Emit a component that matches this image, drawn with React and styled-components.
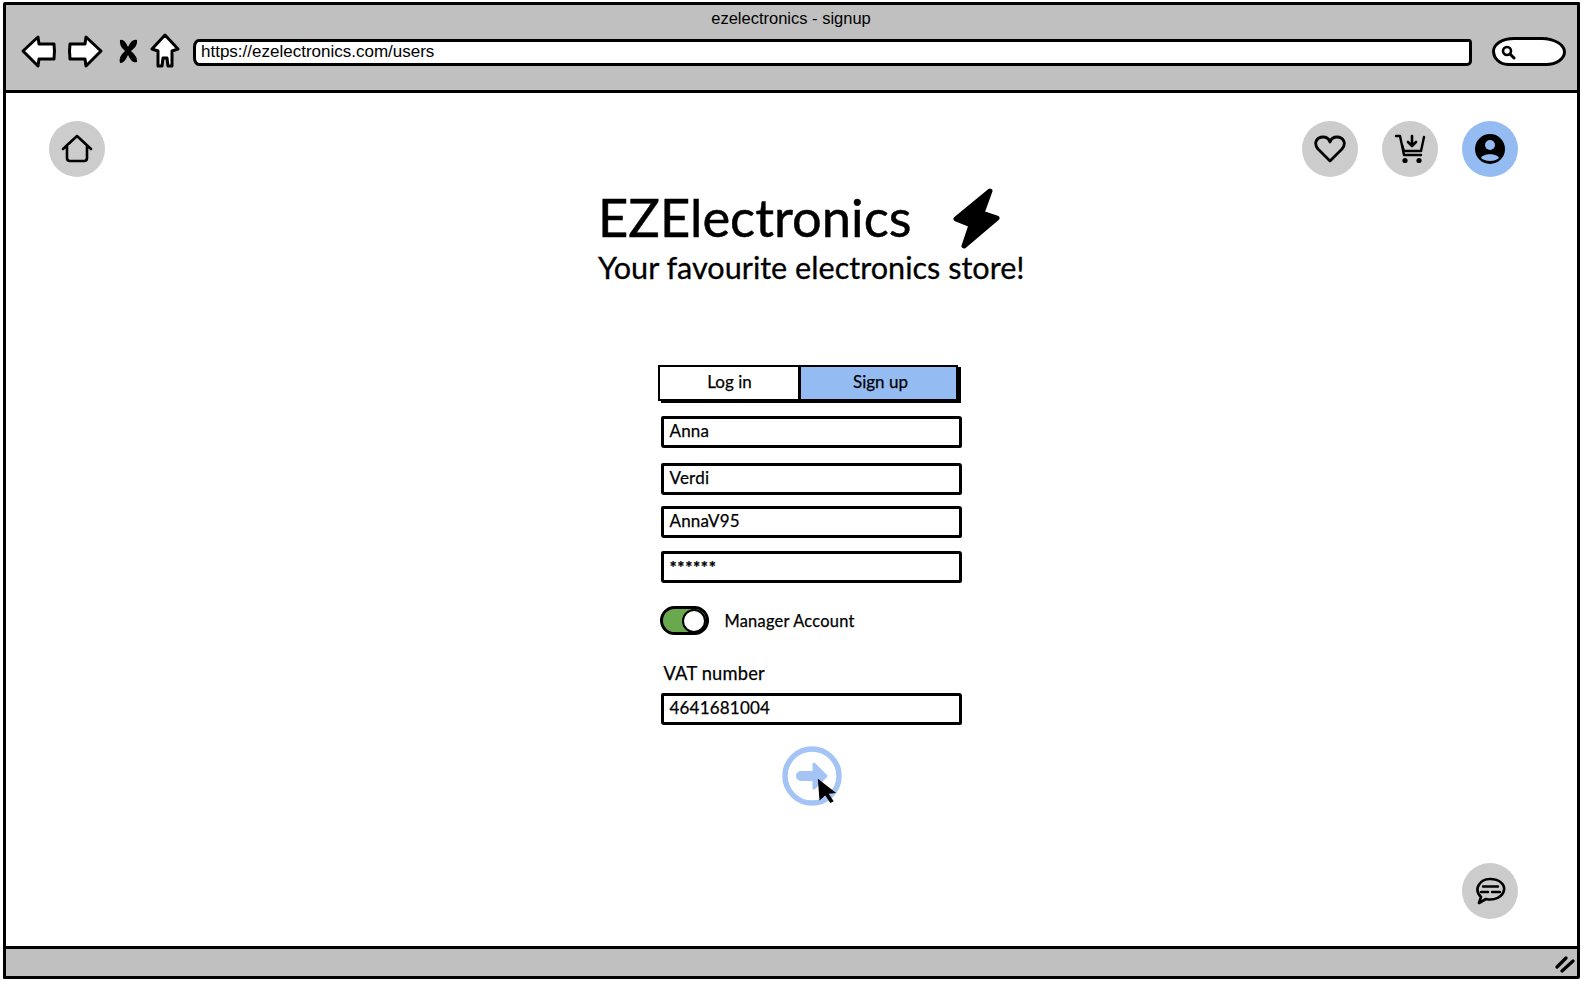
import React from "react";
import styled, { createGlobalStyle } from "styled-components";

const Global = createGlobalStyle`
  html, body { margin: 0; padding: 0; background: #fff; overflow: hidden; }
  #root { height: 981px; }
  * { box-sizing: border-box; }
`;

const Page = styled.div`
  height: 981px;
  width: 1581px;
  padding: 2px 1px 2px 3px;
  font-family: "Lato", "Liberation Sans", sans-serif;
  -webkit-text-stroke: 0.25px #000;
  color: #000;
`;
const Frame = styled.div`
  height: 100%;
  display: flex;
  flex-direction: column;
  border: 3px solid #000;
  border-radius: 2px 1px 2px 1px;
`;
const BrowserBar = styled.header`
  height: 88px;
  flex: none;
  background: #c0c0c0;
  border-bottom: 3px solid #000;
  padding: 5px 11px 0 14px;
  -webkit-text-stroke: 0;
`;
const BrowserTitle = styled.div`
  font: 16.5px/16px "Liberation Sans", Arial, sans-serif;
  text-align: center;
  padding-right: 4px;
  height: 16px;
  margin-bottom: 7px;
`;
const ToolRow = styled.div`
  display: flex;
  align-items: center;
`;
const ToolIcon = styled.svg`
  flex: none;
  display: block;
  margin-right: ${(p) => p.$gap}px;
`;
const AddressBar = styled.div`
  flex: 1;
  height: 27px;
  margin: 3px 20px 0 0;
  background: #fff;
  border: 3px solid #000;
  border-radius: 6px 3px 5px 6px / 8px 4px 5px 8px;
  padding-left: 5px;
  font: 17px/20px "Liberation Sans", Arial, sans-serif;
`;
const SearchBox = styled.div`
  flex: none;
  width: 74px;
  height: 29px;
  margin-top: 1px;
  background: #fff;
  border: 3px solid #000;
  border-radius: 22px 24px 20px 16px / 14px 15px 14px 15px;
  padding: 5px 0 0 6px;
`;
const Content = styled.main`
  flex: 1;
  min-height: 0;
  display: flex;
  flex-direction: column;
  padding: 28px 59px 27px 43px;
  background: #fff;
`;
const NavRow = styled.nav`
  display: flex;
  justify-content: space-between;
  flex: none;
`;
const NavGroup = styled.div`
  display: flex;
  gap: 24px;
`;
const RoundButton = styled.div`
  width: 56px;
  height: 56px;
  border-radius: 50%;
  background: ${(p) => (p.$active ? "#94bbf2" : "#cccccc")};
  display: flex;
  align-items: center;
  justify-content: center;
`;
const Center = styled.div`
  flex: 1;
  display: flex;
  flex-direction: column;
  align-items: center;
  padding-left: 54px;
`;
const Hero = styled.div`
  width: 425px;
  margin-top: 10px;
`;
const TitleRow = styled.div`
  display: flex;
  align-items: flex-start;
  height: 62px;
`;
const Title = styled.h1`
  margin: 0;
  font: 400 52.5px/60px "Lato", sans-serif;
  -webkit-text-stroke: 0.5px #000;
  width: 355px;
  flex: none;
`;
const Bolt = styled.svg`
  flex: none;
  display: block;
  margin-top: 1px;
`;
const Subtitle = styled.div`
  font: 400 30.6px/38px "Lato", sans-serif;
  -webkit-text-stroke: 0.3px #000;
  white-space: nowrap;
`;
const Form = styled.div`
  width: 302px;
  margin-top: 78px;
  display: flex;
  flex-direction: column;
`;
const Tabs = styled.div`
  width: 300px;
  height: 36px;
  margin-left: -2px;
  display: flex;
  border: 2px solid #000;
  box-shadow: 3px 2px 0 #000;
`;
const Tab = styled.div`
  height: 100%;
  width: ${(p) => p.$w}px;
  flex: none;
  background: ${(p) => (p.$active ? "#94bbf2" : "#fff")};
  border-left: ${(p) => (p.$active ? "3px solid #000" : "0")};
  display: flex;
  align-items: center;
  justify-content: center;
  padding: 0 0 3px ${(p) => (p.$active ? 5 : 2)}px;
  font-size: 17px;
`;
const Field = styled.div`
  height: 32px;
  margin-top: ${(p) => p.$top}px;
  margin-left: 1px;
  border: 3px solid #000;
  border-radius: 2px 3px 2px 3px;
  background: #fff;
  padding: 0 6px;
  font-size: 17px;
  font-weight: ${(p) => (p.$stars ? 700 : 400)};
  line-height: ${(p) => (p.$stars ? 27 : 23)}px;
  letter-spacing: ${(p) => (p.$stars ? 0.6 : 0.2)}px;
`;
const ToggleRow = styled.div`
  display: flex;
  align-items: center;
  margin-top: 23px;
  height: 29px;
`;
const Toggle = styled.div`
  width: 49px;
  height: 29px;
  flex: none;
  border: 3px solid #000;
  border-radius: 15px;
  background: #6aa84f;
  display: flex;
  justify-content: flex-end;
  align-items: center;
`;
const Knob = styled.div`
  width: 24px;
  height: 24px;
  border: 2px solid #000;
  border-radius: 50%;
  background: #fff;
`;
const ToggleLabel = styled.span`
  margin-left: 16px;
  font-size: 16.4px;
  letter-spacing: 0.25px;
`;
const FieldLabel = styled.div`
  margin: 27px 0 0 4px;
  height: 22px;
  font-size: 18.3px;
  line-height: 22px;
  letter-spacing: 0.2px;
`;
const SubmitWrap = styled.div`
  align-self: center;
  margin: 21px 0 0 2px;
  position: relative;
  width: 60px;
  height: 60px;
`;
const Cursor = styled.svg`
  position: absolute;
  left: 35px;
  top: 31px;
`;
const ChatRow = styled.div`
  display: flex;
  justify-content: flex-end;
  flex: none;
`;
const Footer = styled.footer`
  height: 30px;
  flex: none;
  background: #c0c0c0;
  border-top: 3px solid #000;
  display: flex;
  justify-content: flex-end;
  align-items: center;
  padding: 2px 2px 0 0;
`;

const App = () => (
  <Page>
    <Global />
    <Frame>
      <BrowserBar>
        <BrowserTitle>ezelectronics - signup</BrowserTitle>
        <ToolRow>
          <ToolIcon $gap={10} width="37" height="36" viewBox="0 0 37 36">
            <path d="M3 18 L18 4 L19 11 L34 11 Q35 18 34 26 L19 26 L18 33 Z" fill="#fff" stroke="#000" strokeWidth="3" strokeLinejoin="round" />
          </ToolIcon>
          <ToolIcon $gap={13} width="37" height="36" viewBox="0 0 37 36">
            <path d="M34 18 L19 4 L18 11 L3 11 Q2 18 3 26 L18 26 L19 33 Z" fill="#fff" stroke="#000" strokeWidth="3" strokeLinejoin="round" />
          </ToolIcon>
          <ToolIcon $gap={11} width="22" height="28" viewBox="0 0 22 28">
            <path d="M3 3 Q7 1 11 10 Q15 1 20 3 Q21 9 14 14 Q21 20 20 25 Q15 27 11 18 Q7 27 3 26 Q1 20 8 14 Q2 9 3 3 Z" fill="#000" />
          </ToolIcon>
          <ToolIcon $gap={13} width="30" height="36" viewBox="0 0 30 36">
            <path d="M15 2 L28 16 L22 18 L22 33 L18 33 L17 25 L13 25 L12 33 L8 33 L8 18 L2 16 Z" fill="#fff" stroke="#000" strokeWidth="3" strokeLinejoin="round" />
          </ToolIcon>
          <AddressBar>https://ezelectronics.com/users</AddressBar>
          <SearchBox>
            <svg width="15" height="15" viewBox="0 0 15 15" style={{ display: "block" }}>
              <circle cx="6" cy="6" r="4" fill="none" stroke="#000" strokeWidth="2.6" />
              <path d="M9 9 L13 13" stroke="#000" strokeWidth="3" strokeLinecap="round" />
            </svg>
          </SearchBox>
        </ToolRow>
      </BrowserBar>
      <Content>
        <NavRow>
          <RoundButton>
            <svg width="32" height="30" viewBox="0 0 32 30">
              <path d="M2 15 L16 2 L30 15 M6 12 V24 Q6 27 9 27 H23 Q26 27 26 24 V12" fill="none" stroke="#000" strokeWidth="2.6" strokeLinecap="round" strokeLinejoin="round" />
            </svg>
          </RoundButton>
          <NavGroup>
            <RoundButton>
              <svg width="32" height="28" viewBox="0 0 32 28">
                <path d="M16 26 L4 14 C-1 8 3 2 9 2 C12 2 15 4 16 7 C17 4 20 2 23 2 C29 2 33 8 28 14 Z" fill="none" stroke="#000" strokeWidth="2.8" strokeLinejoin="round" />
              </svg>
            </RoundButton>
            <RoundButton>
              <svg width="32" height="30" viewBox="0 0 32 30">
                <path d="M2 2 H6 L10 21 H27 M7.5 9 L10 17 H27 L30 3" fill="none" stroke="#000" strokeWidth="2.4" strokeLinecap="round" strokeLinejoin="round" />
                <path d="M18 2 V11 M14 8 L18 12 L22 8" fill="none" stroke="#000" strokeWidth="2.6" strokeLinecap="round" strokeLinejoin="round" />
                <circle cx="11" cy="26.5" r="2.6" fill="#000" />
                <circle cx="25" cy="26.5" r="2.6" fill="#000" />
              </svg>
            </RoundButton>
            <RoundButton $active>
              <svg width="30" height="30" viewBox="0 0 30 30">
                <circle cx="15" cy="15" r="15" fill="#000" />
                <circle cx="15" cy="11" r="5" fill="#94bbf2" />
                <path d="M6 24 C8 19 22 19 24 24 C20 28 10 28 6 24 Z" fill="#94bbf2" />
              </svg>
            </RoundButton>
          </NavGroup>
        </NavRow>
        <Center>
          <Hero>
            <TitleRow>
              <Title>EZElectronics</Title>
              <Bolt width="47" height="62" viewBox="0 0 47 62">
                <path d="M37 3 L3 31 L18 37 L11 58 L44 30 L29 25 Z" fill="#000" stroke="#000" strokeWidth="5" strokeLinejoin="round" />
              </Bolt>
            </TitleRow>
            <Subtitle>Your favourite electronics store!</Subtitle>
          </Hero>
          <Form>
            <Tabs>
              <Tab $w={138}>Log in</Tab>
              <Tab $w={158} $active>Sign up</Tab>
            </Tabs>
            <Field $top={15}>Anna</Field>
            <Field $top={15}>Verdi</Field>
            <Field $top={11}>AnnaV95</Field>
            <Field $top={13} $stars>******</Field>
            <ToggleRow>
              <Toggle><Knob /></Toggle>
              <ToggleLabel>Manager Account</ToggleLabel>
            </ToggleRow>
            <FieldLabel>VAT number</FieldLabel>
            <Field $top={9}>4641681004</Field>
            <SubmitWrap>
              <svg width="60" height="60" viewBox="0 0 60 60">
                <circle cx="30" cy="30" r="27" fill="none" stroke="#a3c4f5" strokeWidth="5.5" />
                <path d="M19 30 H38" stroke="#a3c4f5" strokeWidth="10" strokeLinecap="round" />
                <path d="M32 18 L44 30 L32 42 Z" fill="#a3c4f5" stroke="#a3c4f5" strokeWidth="3" strokeLinejoin="round" />
              </svg>
              <Cursor width="20" height="27" viewBox="0 0 24 30">
                <path d="M1 1 L23 18 L14 19 L20 28 L16 30 L10 21 L3 27 Z" fill="#000" />
              </Cursor>
            </SubmitWrap>
          </Form>
        </Center>
        <ChatRow>
          <RoundButton>
            <svg width="32" height="28" viewBox="0 0 32 28">
              <path d="M5 26 L7 20 C-1 12 6 2 16 2 C26 2 31 8 30 13 C29 20 20 24 12 22 Z" fill="none" stroke="#000" strokeWidth="2.6" strokeLinejoin="round" />
              <path d="M9 9.5 H24 M7 15 H14 M18 15 H26" stroke="#000" strokeWidth="2.4" strokeLinecap="round" />
            </svg>
          </RoundButton>
        </ChatRow>
      </Content>
      <Footer>
        <svg width="20" height="18" viewBox="0 0 20 18">
          <path d="M2 12 L11 3 M7 16 L18 6" stroke="#000" strokeWidth="3.2" strokeLinecap="round" />
        </svg>
      </Footer>
    </Frame>
  </Page>
);

export default App;
